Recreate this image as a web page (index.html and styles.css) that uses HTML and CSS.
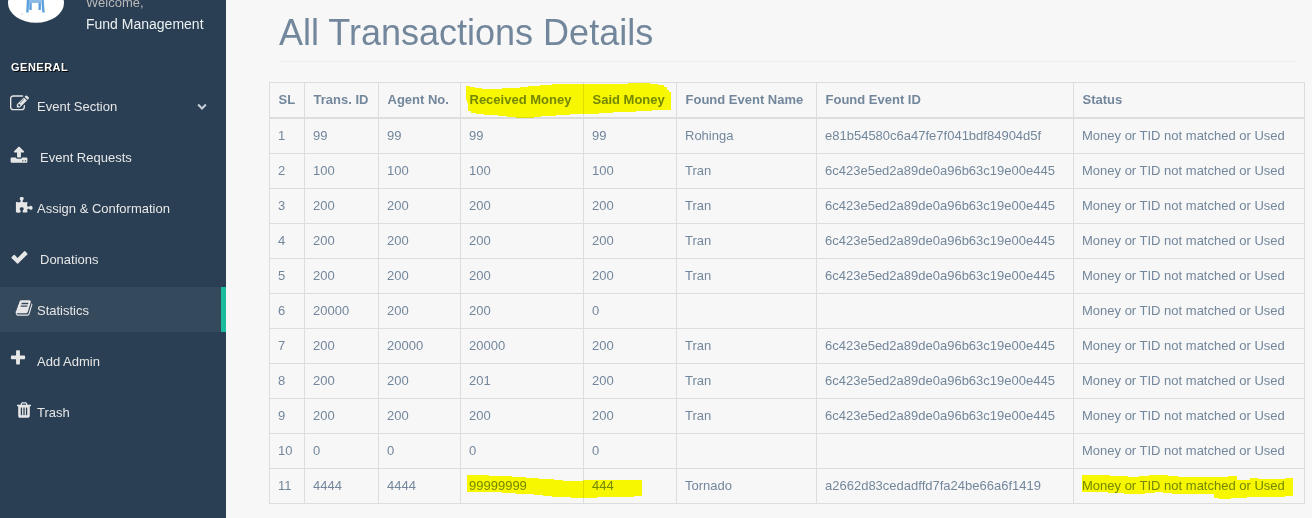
FILE: index.html
```html
<!DOCTYPE html>
<html lang="en">
<head>
<meta charset="utf-8">
<title>All Transactions Details</title>
<link rel="stylesheet" href="styles.css">
</head>
<body>
<div class="app">
  <aside class="sidebar">
    <div class="profile">
      <svg class="avatar" viewBox="0 0 56 23"><ellipse cx="28" cy="3" rx="28" ry="19.700" fill="#fff"/><path d="M20 0L19.400 12.500M22.500 0V10M31.700 0V10M34.500 0L35.500 12.500" stroke="#5b9fde" stroke-width="2.400" fill="none"/><path d="M21 1.500H33" stroke="#8cbce6" stroke-width="3"/><circle cx="14" cy="14" r=".6" fill="#aab"/></svg>
      <div class="who"><span class="welcome">Welcome,</span><span class="name">Fund Management</span></div>
    </div>
    <h3 class="section">GENERAL</h3>
    <nav class="menu">
      <a class="item edit"><svg class="icon" viewBox="0 0 1792 1792"><path d="M888 1184l116-116-152-152-116 116v56h96v96h56zm440-720q-16-16-33 1l-350 350q-17 17-1 33t33-1l350-350q17-17 1-33zm80 594v190q0 119-84.500 203.500t-203.500 84.500h-832q-119 0-203.500-84.500t-84.500-203.500v-832q0-119 84.500-203.500t203.500-84.500h832q63 0 117 25 15 7 18 23 3 17-9 29l-49 49q-14 14-32 8-23-6-45-6h-832q-66 0-113 47t-47 113v832q0 66 47 113t113 47h832q66 0 113-47t47-113v-126q0-13 9-22l64-64q15-15 35-7t20 29zm-96-738l288 288-672 672h-288v-288zm444 132l-92 92-288-288 92-92q28-28 68-28t68 28l152 152q28 28 28 68t-28 68z"/></svg><span class="label">Event Section</span><svg class="chevron" viewBox="0 0 1792 1792"><path d="M1683 808l-742 741q-19 19-45 19t-45-19l-742-741q-19-19-19-45.500t19-45.500l166-165q19-19 45-19t45 19l531 531 531-531q19-19 45-19t45 19l166 165q19 19 19 45.500t-19 45.500z"/></svg></a>
      <a class="item wide"><svg class="icon" viewBox="0 0 1792 1792"><path d="M1344 1472q0-26-19-45t-45-19-45 19-19 45 19 45 45 19 45-19 19-45zm256 0q0-26-19-45t-45-19-45 19-19 45 19 45 45 19 45-19 19-45zm128-224v320q0 40-28 68t-68 28h-1472q-40 0-68-28t-28-68v-320q0-40 28-68t68-28h427q21 56 70.500 92t110.500 36h256q61 0 110.500-36t70.500-92h427q40 0 68 28t28 68zm-325-648q-17 40-59 40h-256v448q0 26-19 45t-45 19h-256q-26 0-45-19t-19-45v-448h-256q-42 0-59-40-17-39 14-69l448-448q18-19 45-19t45 19l448 448q31 30 14 69z"/></svg><span class="label">Event Requests</span></a>
      <a class="item inset"><svg class="icon" viewBox="0 0 1792 1792"><path d="M1755 1083q0 81-44.500 135t-123.500 54q-41 0-77.500-17.500t-59-38-56.500-38-71-17.500q-110 0-110 124 0 39 16 115t15 115v5q-22 0-33 1-34 3-97.500 11.500t-115.500 13.500-98 5q-61 0-103-26.500t-42-83.500q0-37 17.500-71t38-56.500 38-59 17.500-77.500q0-79-54-123.500t-135-44.500q-84 0-143 45.500t-59 127.500q0 43 15 83t33.500 64.500 33.500 53 15 50.500q0 45-46 89-37 35-117 35-95 0-245-24-9-2-27.500-4t-27.500-4l-13-2q-1 0-3-1-2 0-2-1v-1024q2 1 17.500 3.500t34 5 21.500 3.500q150 24 245 24 80 0 117-35 46-44 46-89 0-22-15-50.500t-33.500-53-33.500-64.500-15-83q0-82 59-127.500t144-45.500q80 0 134 44.500t54 123.500q0 41-17.500 77.500t-38 59-38 56.500-17.500 71q0 57 42 83.500t103 26.500q64 0 180-15t163-17v2q-1 2-3.500 17.500t-5 34-3.500 21.500q-24 150-24 245 0 80 35 117 44 46 89 46 22 0 50.500-15t53-33.500 64.500-33.500 83-15q82 0 127.500 59t45.500 143z"/></svg><span class="label">Assign &amp; Conformation</span></a>
      <a class="item wide"><svg class="icon" viewBox="0 0 18 18"><path d="M1.500 9.300 3.700 7Q4.200 6.500 4.700 7L7.600 9.900 14.200 3.300Q14.700 2.800 15.200 3.300L17.300 5.400Q17.800 5.900 17.300 6.400L8.100 15.500Q7.600 16 7.100 15.500L1.500 10.100Q1.100 9.700 1.500 9.300Z"/></svg><span class="label">Donations</span></a>
      <a class="item inset active"><svg class="icon" viewBox="0 0 1792 1792"><path d="M1703 478q40 57 18 129l-275 906q-19 64-76.500 107.500t-122.500 43.500h-923q-77 0-148.500-53.500t-99.500-131.500q-24-67-2-127 0-4 3-27t4-37q1-8-3-21.500t-3-19.500q2-11 8-21t16.500-23.500 16.500-23.500q23-38 45-91.500t30-91.500q3-10 .5-30t-.5-28q3-11 17-28t17-23q21-36 42-92t25-90q1-9-2.500-32t.5-28q4-13 22-30.500t22-22.500q19-26 42.500-84.500t27.500-96.500q1-8-3-25.500t-2-26.500q2-8 9-18t18-23 17-21q8-12 16.500-30.500t15-35 16-36 19.500-32 26.500-23.500 36-11.500 47.500 5.500l-1 3q38-9 51-9h761q74 0 114 56t18 130l-274 906q-36 119-71.500 153.500t-128.500 34.500h-869q-27 0-38 15-11 16-1 43 24 70 144 70h923q29 0 56-15.500t35-41.500l300-987q7-22 5-57 38 15 59 43zm-1064 2q-4 13 2 22.500t20 9.500h608q13 0 25.500-9.500t16.500-22.500l21-64q4-13-2-22.500t-20-9.500h-608q-13 0-25.500 9.500t-16.500 22.500zm-83 256q-4 13 2 22.500t20 9.500h608q13 0 25.500-9.500t16.500-22.500l21-64q4-13-2-22.500t-20-9.500h-608q-13 0-25.500 9.500t-16.500 22.500z"/></svg><span class="label">Statistics</span></a>
      <a class="item plus"><svg class="icon" viewBox="0 0 1792 1792"><path d="M1600 736v192q0 40-28 68t-68 28h-416v416q0 40-28 68t-68 28h-192q-40 0-68-28t-28-68v-416h-416q-40 0-68-28t-28-68v-192q0-40 28-68t68-28h416v-416q0-40 28-68t68-28h192q40 0 68 28t28 68v416h416q40 0 68 28t28 68z"/></svg><span class="label">Add Admin</span></a>
      <a class="item inset"><svg class="icon" viewBox="0 0 1792 1792"><path d="M704 1376v-704q0-14-9-23t-23-9h-64q-14 0-23 9t-9 23v704q0 14 9 23t23 9h64q14 0 23-9t9-23zm256 0v-704q0-14-9-23t-23-9h-64q-14 0-23 9t-9 23v704q0 14 9 23t23 9h64q14 0 23-9t9-23zm256 0v-704q0-14-9-23t-23-9h-64q-14 0-23 9t-9 23v704q0 14 9 23t23 9h64q14 0 23-9t9-23zm-544-992h448l-48-117q-7-9-17-11h-317q-10 2-17 11zm928 32v64q0 14-9 23t-23 9h-96v948q0 83-47 143.500t-113 60.500h-832q-66 0-113-58.500t-47-141.500v-952h-96q-14 0-23-9t-9-23v-64q0-14 9-23t23-9h309l70-167q15-37 54-63t79-26h320q40 0 79 26t54 63l70 167h309q14 0 23 9t9 23z"/></svg><span class="label">Trash</span></a>
    </nav>
  </aside>
  <main class="content">
    <h1 class="title">All Transactions Details</h1>
    <table class="grid">
      <colgroup><col class="c1"><col class="c2"><col class="c3"><col class="c4"><col class="c5"><col class="c6"><col class="c7"><col class="c8"></colgroup>
      <thead><tr><th>SL</th><th>Trans. ID</th><th>Agent No.</th><th>Received Money</th><th>Said Money</th><th>Found Event Name</th><th>Found Event ID</th><th>Status</th></tr></thead>
      <tbody>
        <tr><td>1</td><td>99</td><td>99</td><td>99</td><td>99</td><td>Rohinga</td><td>e81b54580c6a47fe7f041bdf84904d5f</td><td>Money or TID not matched or Used</td></tr>
        <tr><td>2</td><td>100</td><td>100</td><td>100</td><td>100</td><td>Tran</td><td>6c423e5ed2a89de0a96b63c19e00e445</td><td>Money or TID not matched or Used</td></tr>
        <tr><td>3</td><td>200</td><td>200</td><td>200</td><td>200</td><td>Tran</td><td>6c423e5ed2a89de0a96b63c19e00e445</td><td>Money or TID not matched or Used</td></tr>
        <tr><td>4</td><td>200</td><td>200</td><td>200</td><td>200</td><td>Tran</td><td>6c423e5ed2a89de0a96b63c19e00e445</td><td>Money or TID not matched or Used</td></tr>
        <tr><td>5</td><td>200</td><td>200</td><td>200</td><td>200</td><td>Tran</td><td>6c423e5ed2a89de0a96b63c19e00e445</td><td>Money or TID not matched or Used</td></tr>
        <tr><td>6</td><td>20000</td><td>200</td><td>200</td><td>0</td><td></td><td></td><td>Money or TID not matched or Used</td></tr>
        <tr><td>7</td><td>200</td><td>20000</td><td>20000</td><td>200</td><td>Tran</td><td>6c423e5ed2a89de0a96b63c19e00e445</td><td>Money or TID not matched or Used</td></tr>
        <tr><td>8</td><td>200</td><td>200</td><td>201</td><td>200</td><td>Tran</td><td>6c423e5ed2a89de0a96b63c19e00e445</td><td>Money or TID not matched or Used</td></tr>
        <tr><td>9</td><td>200</td><td>200</td><td>200</td><td>200</td><td>Tran</td><td>6c423e5ed2a89de0a96b63c19e00e445</td><td>Money or TID not matched or Used</td></tr>
        <tr><td>10</td><td>0</td><td>0</td><td>0</td><td>0</td><td></td><td></td><td>Money or TID not matched or Used</td></tr>
        <tr><td>11</td><td>4444</td><td>4444</td><td>99999999</td><td>444</td><td>Tornado</td><td>a2662d83cedadffd7fa24be66a6f1419</td><td>Money or TID not matched or Used</td></tr>
      </tbody>
    </table>
  </main>
</div>
<!-- Highlighter strokes over the table -->
<svg class="marker" viewBox="0 0 1312 518" shape-rendering="crispEdges">
  <path d="M466 86H470V87H475V88H482V89H502V88H520V87H528V86H540V85H552V84H564V83.500H602V84H628V83H650V84H658V85H664V87H667V90H669V92H671V110H652V111H636V112H613V113H599V114H570V115H556V116H541V117H534V118H516V117H507V116H498V115H484V114H476V113H471V111H468V103H467V100H466Z"/>
  <path d="M467 475H489V476H512V477H526V478H539V479H554V480H563V481H583V480H642V496H634V497H597V498H571V497H552V496H543V495H534V494H516V493H502V492H467Z"/>
  <path d="M1082 475H1110V476H1128V477H1139V476H1149V475H1168V476H1178V477H1228V476H1237V480H1250V478H1258V479H1285V478H1293V496H1285V497H1247V498H1231V499H1219V498H1214V494H1172V493H1163V492H1155V493H1145V494H1124V493H1108V492H1082Z"/>
</svg>
</body>
</html>
```

FILE: styles.css
```css
* { box-sizing: border-box; }
body {
  margin: 0;
  background: #f7f7f7;
  font-family: "Liberation Sans", Arial, sans-serif;
  font-size: 13px;
  color: #73879c;
  overflow: hidden;
}
.app { display: flex; height: 518px; }
.sidebar { width: 226px; flex: none; background: #2a3f54; }
.profile { display: flex; height: 60px; padding-left: 8px; }
.avatar { width: 56px; height: 23px; flex: none; }
.who { display: flex; flex-direction: column; margin: -6px 0 0 22px; }
.welcome { color: #bab8b8; line-height: 18px; }
.name { color: #ecf0f1; font-size: 14px; line-height: 16px; margin-top: 4px; }
.section {
  margin: 0;
  padding-left: 11px;
  height: 23px;
  color: #fff;
  font-size: 11px;
  line-height: 15px;
  letter-spacing: .5px;
  text-shadow: 1px 1px #000;
}
.menu { display: flex; flex-direction: column; gap: 6px; }
.item {
  display: flex;
  align-items: center;
  height: 45px;
  padding: 0 19px 0 10px;
  color: #e7e7e7;
  font-weight: 400;
}
.icon { width: 18px; height: 18px; margin: -3px 9px 0 0; fill: #e7e7e7; }
.edit .icon { width: 19px; height: 19px; margin: -4px 8px 0 0; }
.label { flex: 1; padding-top: 1px; white-space: nowrap; }
.wide .icon { margin-right: 12px; }
.inset { padding-left: 15px; }
.inset .icon { margin-right: 4px; }
.plus { padding-left: 9px; }
.plus .icon { margin: -5px 10px 0 0; }
.active { background: #35495d; border-right: 5px solid #1abb9c; }
.chevron { width: 10px; height: 10px; margin-top: 1px; fill: #c4cfda; }
.content { flex: 1; padding: 0 7px 0 43px; }
.title {
  margin: 0 9px 20px 10px;
  height: 62px;
  padding-top: 13px;
  border-bottom: 1px solid #eee;
  font-size: 36px;
  line-height: 40px;
  font-weight: 500;
  white-space: nowrap;
}
.grid {
  width: 1036px;
  table-layout: fixed;
  border-collapse: separate;
  border-spacing: 0;
  border: solid #ddd;
  border-width: 1px 0 0 1px;
  font-size: 13px;
}
.grid th, .grid td {
  height: 35px;
  padding: 0 0 1px 8px;
  border: solid #ddd;
  border-width: 0 1px 1px 0;
  text-align: left;
  line-height: 18px;
  white-space: nowrap;
}
.grid th { height: 36px; padding-left: 8.5px; border-bottom-width: 2px; }
.c1 { width: 35px; }
.c2 { width: 74px; }
.c3 { width: 82px; }
.c4 { width: 123px; }
.c5 { width: 93px; }
.c6 { width: 140px; }
.c7 { width: 257px; }
.c8 { width: 231px; }
.marker {
  position: absolute;
  top: 0;
  left: 0;
  width: 1312px;
  height: 518px;
  fill: #ff0;
  mix-blend-mode: multiply;
  pointer-events: none;
}
```
